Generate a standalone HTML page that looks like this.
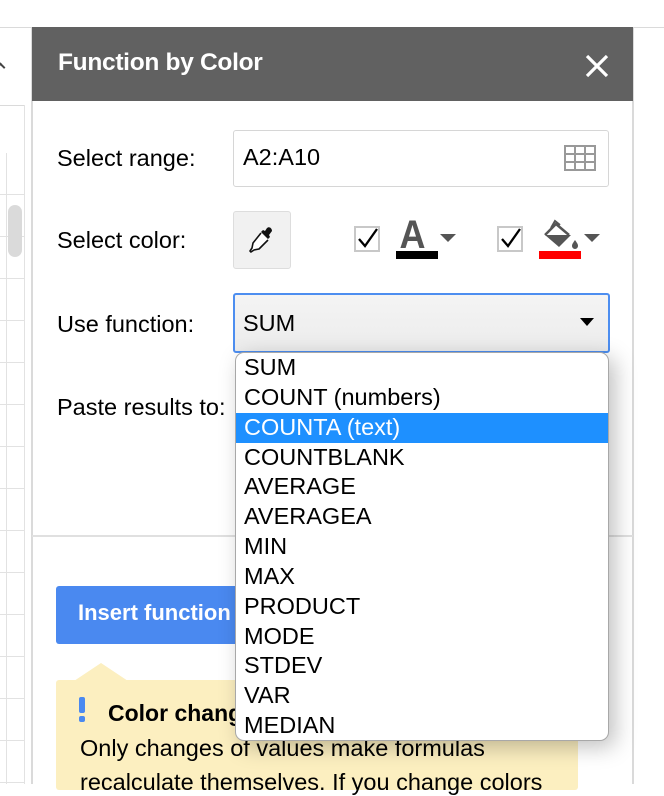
<!DOCTYPE html>
<html><head><meta charset="utf-8"><style>
*{margin:0;padding:0;box-sizing:border-box}
body{width:664px;height:784px;overflow:hidden;background:#fff;font-family:"Liberation Sans",Arial,sans-serif;position:relative}
.a{position:absolute}
.lbl{position:absolute;left:57px;font-size:23.5px;color:#000}
.it{height:29.85px;line-height:29.85px;padding-left:8px;font-size:23.5px;color:#000;white-space:nowrap}
</style></head><body>
<div class="a" style="left:0;top:27px;width:664px;height:1px;background:#dadada"></div>
<div class="a" style="left:0;top:105px;width:24px;height:1px;background:#dadada"></div>
<div class="a" style="left:0;top:153px;width:24px;height:631px;background:repeating-linear-gradient(#fff 0,#fff 41px,#e2e2e2 41px,#e2e2e2 42px)"></div>
<div class="a" style="left:6px;top:153px;width:1px;height:631px;background:#e2e2e2"></div>
<div class="a" style="left:24px;top:105px;width:1px;height:679px;background:#e2e2e2"></div>
<div class="a" style="left:8px;top:205px;width:14px;height:52px;background:#dadada;border-radius:7px"></div>
<div class="a" style="left:-3px;top:64px;width:7px;height:7px;border-left:2px solid #444;border-top:2px solid #444;transform:rotate(45deg)"></div>
<!-- panel -->
<div class="a" style="left:31px;top:27px;width:603px;height:757px;background:#fff;border-left:2px solid #dadada;border-right:2px solid #dadada"></div>
<div class="a" style="left:32px;top:27px;width:601px;height:74px;background:#616161"></div>
<div class="a" style="left:58px;top:49px;font-size:24.5px;font-weight:bold;color:#fff;letter-spacing:-0.3px">Function by Color</div>
<svg class="a" style="left:584px;top:53px" width="26" height="26" viewBox="0 0 26 26"><path d="M3 3L23 23M23 3L3 23" stroke="#fff" stroke-width="3.2"/></svg>

<div class="lbl" style="top:145px">Select range:</div>
<div class="a" style="left:233px;top:130px;width:376px;height:57px;border:1px solid #d6d6d6;border-radius:3px"></div>
<div class="a" style="left:243px;top:144px;font-size:23.5px">A2:A10</div>
<svg class="a" style="left:564px;top:145px" width="32" height="26"><g stroke="#999" stroke-width="2" fill="none"><rect x="1" y="1" width="30" height="24"/><path d="M11 1V25M21 1V25M1 9H31M1 17H31"/></g></svg>

<div class="lbl" style="top:227px">Select color:</div>
<div class="a" style="left:233px;top:211px;width:58px;height:58px;background:#f1f1f1;border:1px solid #ddd;border-radius:3px"></div>
<svg class="a" style="left:249px;top:226px" width="26" height="28" viewBox="0 0 26 28"><path d="M18 2c2-2 5 0 5 3l-3 4 1 2-2 2-7-7 2-2 2 1z" fill="#111"/><path d="M12 7L4 17l-1 5-2 3 1 1 3-2 5-1 9-9" fill="#fff" stroke="#111" stroke-width="1.6" stroke-linejoin="round"/></svg>
<div class="a" style="left:354px;top:226px;width:26px;height:26px;border:2px solid #c8c8c8"></div>
<svg class="a" style="left:356px;top:227px" width="24" height="22"><path d="M3 12l6 7L21 2" stroke="#000" stroke-width="2.3" fill="none"/></svg>
<div class="a" style="left:398px;top:216px;font-size:40px;font-weight:bold;color:#555;line-height:38px;transform:scaleX(0.9)">A</div>
<div class="a" style="left:396px;top:251px;width:42px;height:8px;background:#000"></div>
<svg class="a" style="left:440px;top:234px" width="16" height="8"><path d="M0 0H16L8 8z" fill="#555"/></svg>
<div class="a" style="left:497px;top:226px;width:26px;height:26px;border:2px solid #c8c8c8"></div>
<svg class="a" style="left:499px;top:227px" width="24" height="22"><path d="M3 12l6 7L21 2" stroke="#000" stroke-width="2.3" fill="none"/></svg>
<svg class="a" style="left:541px;top:219px" width="42" height="32" viewBox="0 0 42 32"><path d="M4 16H30L18 28z" fill="#555"/><path d="M4 16L15 5 28 16" stroke="#555" stroke-width="2.5" fill="none"/><path d="M10 9L14 2l5 4" stroke="#555" stroke-width="2" fill="none"/><path d="M34 21c-2 3-3 4-3 6a3 3 0 006 0c0-2-1-3-3-6z" fill="#555"/></svg>
<div class="a" style="left:539px;top:251px;width:42px;height:8px;background:#f00"></div>
<svg class="a" style="left:584px;top:234px" width="16" height="8"><path d="M0 0H16L8 8z" fill="#555"/></svg>

<div class="lbl" style="top:311px">Use function:</div>
<div class="a" style="left:233px;top:293px;width:377px;height:60px;border:2px solid #4d8ef0;border-radius:3px;background:linear-gradient(#f4f4f4,#ececec)"></div>
<div class="a" style="left:243px;top:310px;font-size:23.5px">SUM</div>
<svg class="a" style="left:580px;top:318px" width="14" height="8"><path d="M0 0H14L7 8z" fill="#000"/></svg>

<div class="lbl" style="top:394px">Paste results to:</div>
<div class="a" style="left:32px;top:535px;width:601px;height:2px;background:#e0e0e0"></div>
<div class="a" style="left:56px;top:586px;width:200px;height:58px;background:#4a89f0;border-radius:3px"></div>
<div class="a" style="left:78px;top:600px;font-size:22px;font-weight:bold;color:#fff">Insert function</div>
<div class="a" style="left:56px;top:680px;width:522px;height:110px;background:#fcefc0;border-radius:3px"></div>
<div class="a" style="left:74px;top:663px;width:0;height:0;border-left:27px solid transparent;border-right:27px solid transparent;border-bottom:18px solid #fcefc0"></div>
<div class="a" style="left:79px;top:697px;width:6px;height:16px;background:#4a89f0;border-radius:2px"></div>
<div class="a" style="left:79px;top:716px;width:6px;height:6px;background:#4a89f0;border-radius:2px"></div>
<div class="a" style="left:108px;top:700px;font-size:23px;font-weight:bold">Color changes</div>
<div class="a" style="left:80px;top:735px;font-size:23.5px;white-space:nowrap">Only changes of values make formulas</div>
<div class="a" style="left:80px;top:769px;font-size:23.5px;white-space:nowrap">recalculate themselves. If you change colors</div>

<div class="a" style="left:235px;top:352px;width:374px;height:389px;background:#fff;border:1px solid #a8a8a8;border-radius:9px;box-shadow:6px 6px 22px rgba(0,0,0,.25);overflow:hidden">
<div class="it">SUM</div>
<div class="it">COUNT (numbers)</div>
<div class="it" style="background:#1e90ff;color:#fff">COUNTA (text)</div>
<div class="it">COUNTBLANK</div>
<div class="it">AVERAGE</div>
<div class="it">AVERAGEA</div>
<div class="it">MIN</div>
<div class="it">MAX</div>
<div class="it">PRODUCT</div>
<div class="it">MODE</div>
<div class="it">STDEV</div>
<div class="it">VAR</div>
<div class="it">MEDIAN</div>
</div>
</body></html>
